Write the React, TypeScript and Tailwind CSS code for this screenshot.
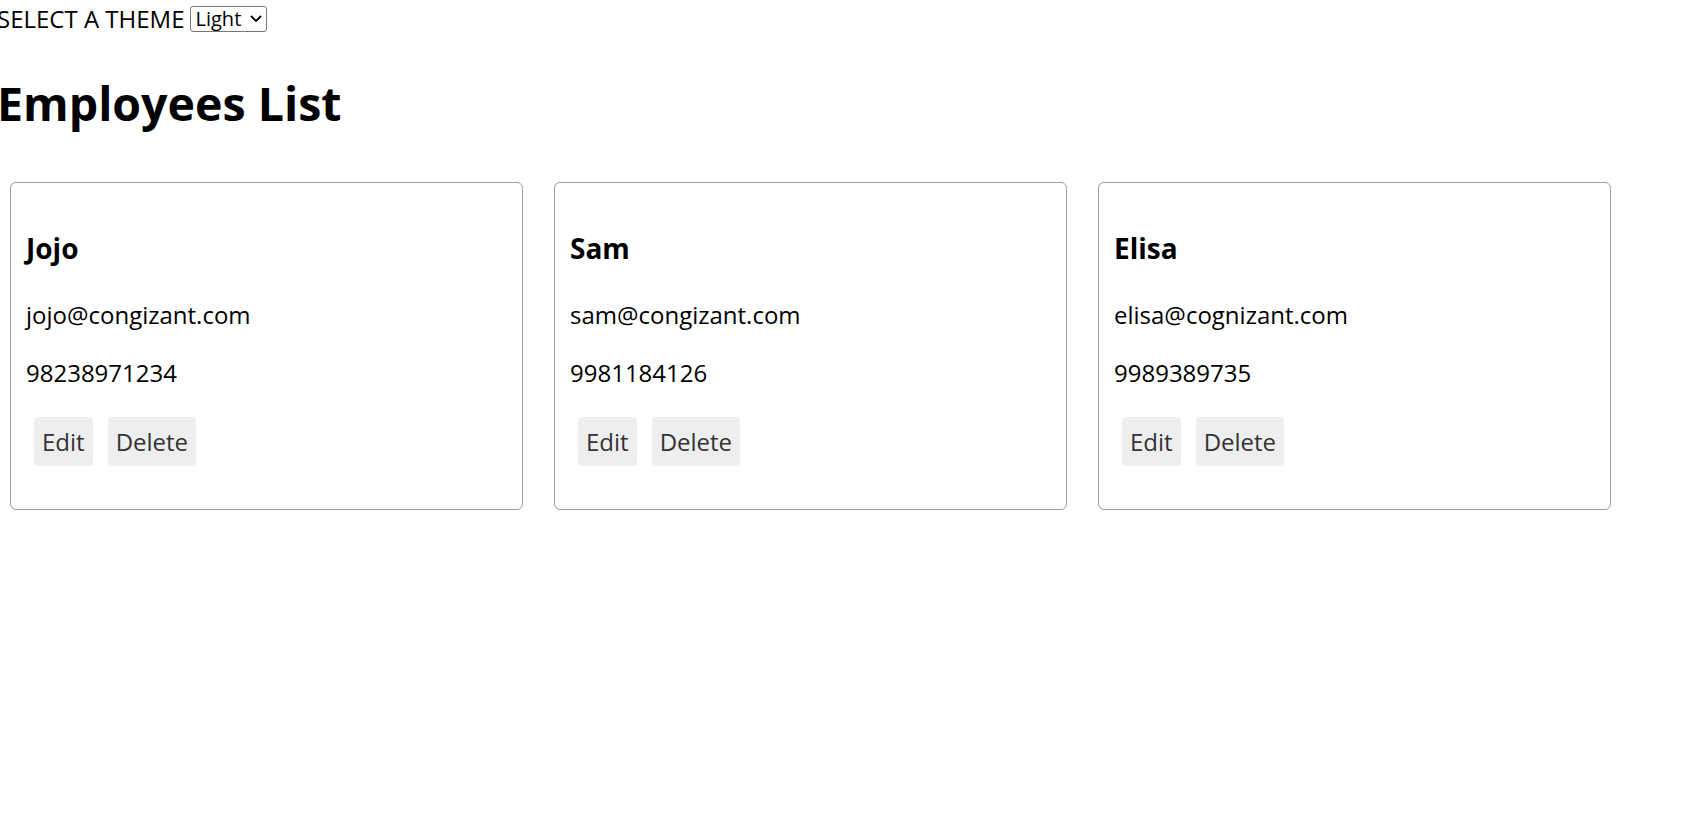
import React, { useState } from 'react';

const employees = [
  { id: 1, name: 'Jojo', email: 'jojo@congizant.com', phone: '98238971234' },
  { id: 2, name: 'Sam', email: 'sam@congizant.com', phone: '9981184126' },
  { id: 3, name: 'Elisa', email: 'elisa@cognizant.com', phone: '9989389735' },
];

function EmployeeCard({ emp }) {
  return (
    <div className="w-[513px] h-[328px] shrink-0 border border-[#9e9e9e] rounded-[6px] px-[15px] pt-[15px] bg-white">
      <h3 className="mt-[32px] text-[28px] leading-[36px] font-bold">{emp.name}</h3>
      <p className="mt-[33px] text-[24px] leading-[32px]">{emp.email}</p>
      <p className="mt-[26px] text-[24px] leading-[32px]">{emp.phone}</p>
      <div className="mt-[28px] flex gap-[15px] pl-[8px]">
        <button className="h-[49px] px-[8px] bg-[#eeeeee] text-[#333333] rounded-[4px] text-[24px] leading-[32px]">Edit</button>
        <button className="h-[49px] px-[8px] bg-[#eeeeee] text-[#333333] rounded-[4px] text-[24px] leading-[32px]">Delete</button>
      </div>
    </div>
  );
}

export default function App() {
  const [theme, setTheme] = useState('Light');

  return (
    <div className="min-h-screen bg-white text-black font-['Open_Sans',sans-serif]">
      <div className="flex items-start -ml-[3px] h-[36px] pt-[2px]">
        <span className="text-[24px] leading-[34px]">SELECT A THEME</span>
        <div className="relative ml-[5px] mt-[4px]">
          <select
            value={theme}
            onChange={(e) => setTheme(e.target.value)}
            className="appearance-none h-[26px] border border-[#767676] rounded-[3px] text-[20px] leading-[24px] pl-[5px] pr-[24px] bg-white"
          >
            <option>Light</option>
            <option>Dark</option>
          </select>
          <svg
            className="pointer-events-none absolute right-[5px] top-[9px]"
            width="12"
            height="8"
            viewBox="0 0 12 8"
            fill="none"
          >
            <path d="M1.5 1.5 L6 6 L10.5 1.5" stroke="#000" strokeWidth="1.8" strokeLinecap="round" strokeLinejoin="round" />
          </svg>
        </div>
      </div>

      <h1 className="mt-[39px] -ml-[3px] text-[46.5px] leading-[56px] font-bold">Employees List</h1>

      <div className="mt-[51px] ml-[10px] flex gap-[31px]">
        {employees.map((emp) => (
          <EmployeeCard key={emp.id} emp={emp} />
        ))}
      </div>
    </div>
  );
}
